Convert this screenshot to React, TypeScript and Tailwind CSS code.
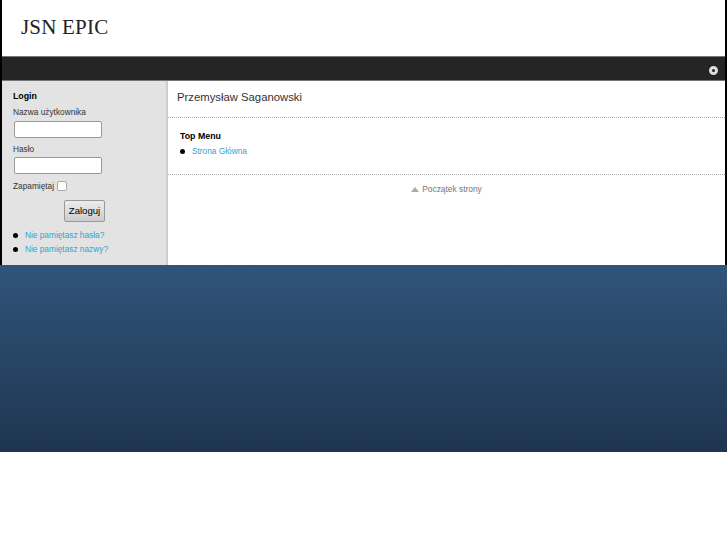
const sans = { fontFamily: '"Liberation Sans", Arial, sans-serif' }

function BulletLink({ label }: { label: string }) {
  return (
    <li className="flex items-center gap-[7px] h-[14px]">
      <span className="w-[5px] h-[5px] rounded-full bg-black shrink-0" />
      <a href="#" className="text-[8.3px] text-[#2aa5d2] leading-[14px]">
        {label}
      </a>
    </li>
  )
}

function Sidebar() {
  return (
    <aside className="w-[166px] shrink-0 bg-[#e3e3e3] pl-[11px] pt-[8px] flex flex-col relative">
      <h3 className="text-[8.8px] leading-[14px] font-bold text-black">Login</h3>
      <label className="mt-[2px] text-[8.3px] leading-[14px] text-[#333]">Nazwa użytkownika</label>
      <input className="mt-[2px] ml-[1px] w-[88px] h-[17px] bg-white border border-[#999] rounded-[2px]" />
      <label className="mt-[4px] text-[8.3px] leading-[14px] text-[#333]">Hasło</label>
      <input className="mt-[1px] ml-[1px] w-[88px] h-[17px] bg-white border border-[#999] rounded-[2px]" />
      <div className="mt-[5px] flex items-center gap-[3px] h-[14px]">
        <span className="text-[8.3px] text-[#333]">Zapamiętaj</span>
        <input type="checkbox" className="appearance-none w-[10px] h-[10px] bg-white border border-[#aaa] rounded-[2px]" />
      </div>
      <button className="mt-[7px] ml-[51px] w-[41px] h-[22px] text-[9.6px] text-black border border-[#999] rounded-[2px] bg-gradient-to-b from-[#ececec] to-[#cdcdcd]">
        Zaloguj
      </button>
      <ul className="mt-[6px] flex flex-col">
        <BulletLink label="Nie pamiętasz hasła?" />
        <BulletLink label="Nie pamiętasz nazwy?" />
      </ul>
      <div className="absolute right-0 top-0 bottom-0 w-[3px] bg-gradient-to-r from-[#e3e3e3] to-[#c4c4c4]" />
    </aside>
  )
}

function MainColumn() {
  return (
    <main className="flex-1 bg-white flex flex-col">
      <div className="h-[37px] pl-[9px] pb-[4px] flex items-center border-b border-dotted border-[#aaa]">
        <h2 className="text-[11.3px] text-[#333]">Przemysław Saganowski</h2>
      </div>
      <div className="h-[57px] pl-[12px] pt-[11px] border-b border-dotted border-[#aaa]">
        <h3 className="text-[8.8px] leading-[14px] font-bold text-black">Top Menu</h3>
        <ul className="mt-[1px]">
          <BulletLink label="Strona Główna" />
        </ul>
      </div>
      <div className="h-[28px] flex items-center justify-center gap-[3px]">
        <svg width="8" height="5" viewBox="0 0 8 5">
          <path d="M4 0 L8 5 L0 5 Z" fill="#aaa" />
        </svg>
        <a href="#" className="text-[8.4px] text-[#777]">Początek strony</a>
      </div>
    </main>
  )
}

export default function App() {
  return (
    <div className="min-h-[545px] bg-white" style={sans}>
      <div className="h-[265px] border-x-2 border-black flex flex-col">
        <header className="h-[56px] bg-white pl-[19px] flex items-center pb-[1px]">
          <h1 className="text-[21px] text-[#222] tracking-[0.2px]" style={{ fontFamily: '"Liberation Serif", serif' }}>
            JSN EPIC
          </h1>
        </header>
        <div className="h-[25px] bg-[#252525] border-y border-[#777] flex items-center justify-end pr-[7px] pt-[3px]">
          <svg width="9" height="9" viewBox="0 0 9 9">
            <circle cx="4.5" cy="4.5" r="3" fill="none" stroke="#ddd" strokeWidth="3" />
          </svg>
        </div>
        <div className="flex-1 flex min-h-0">
          <Sidebar />
          <MainColumn />
        </div>
      </div>
      <div className="h-[187px] bg-[image:radial-gradient(rgba(0,0,0,0.05)_1px,transparent_1px),linear-gradient(to_bottom,#30557b,#1f3550)] bg-[length:3px_3px,100%_100%]" />
    </div>
  )
}
